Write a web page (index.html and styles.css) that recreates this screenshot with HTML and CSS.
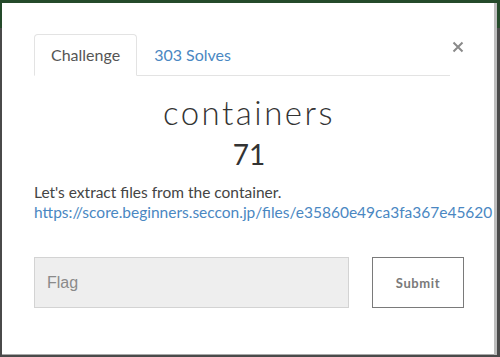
FILE: index.html
```html
<!DOCTYPE html>
<html lang="en">
<head>
    <meta charset="UTF-8">
    <meta name="viewport" content="width=device-width, initial-scale=1.0">
    <title>containers - Challenge</title>
    <link rel="stylesheet" href="styles.css">
</head>
<body>
    <div class="modal">
        <div class="modal-header">
            <ul class="tabs">
                <li class="tab active">Challenge</li>
                <li class="tab"><a href="#solves">303 Solves</a></li>
            </ul>
            <button class="close" type="button" aria-label="Close">
                <svg width="12" height="12" viewBox="0 0 12 12">
                    <path d="M1.5 1.5 L10.5 10.5 M10.5 1.5 L1.5 10.5" stroke="#8a8a8a" stroke-width="2" fill="none"/>
                </svg>
            </button>
        </div>

        <h2 class="challenge-name">containers</h2>
        <h3 class="challenge-value">71</h3>

        <div class="challenge-desc">
            <p>Let's extract files from the container.</p>
            <a href="#file">https://score.beginners.seccon.jp/files/e35860e49ca3fa367e45620</a>
        </div>

        <form class="flag-form">
            <input class="flag-input" type="text" placeholder="Flag">
            <button class="submit" type="button">Submit</button>
        </form>
    </div>
</body>
</html>
```

FILE: styles.css
```css
html, body {
    margin: 0;
    height: 357px;
    overflow: hidden;
}
body {
    font-family: 'Lato', sans-serif;
    background: linear-gradient(#244a2a 0, #244a2a 28px, #4a4a4a 28px);
    padding-top: 3px;
    box-sizing: border-box;
}
.modal {
    margin-left: 2px;
    width: 492px;
    height: 352px;
    box-sizing: border-box;
    background: white;
    border-bottom: 1px solid #a9a9a9;
    box-shadow: 3px 0 0 #bdbdbd;
    padding: 31px 30px 0 32px;
}
.modal-header {
    display: flex;
    align-items: flex-start;
}
.tabs {
    flex: 1;
    display: flex;
    list-style: none;
    margin: 0;
    padding: 0;
    border-bottom: 1px solid #e3e3e3;
}
.tab {
    height: 40px;
    line-height: 40px;
    padding: 0 16px;
    font-size: 16px;
    margin-bottom: -1px;
    border: 1px solid transparent;
    border-radius: 4px 4px 0 0;
}
.tab.active {
    color: #555;
    background: white;
    border-color: #e3e3e3 #e3e3e3 white;
}
.tab a {
    color: #4a87c2;
    text-decoration: none;
}
.close {
    background: none;
    border: none;
    padding: 0;
    margin: 7px 0 0 2px;
    width: 12px;
    height: 12px;
    cursor: pointer;
}
.close svg {
    display: block;
}
.challenge-name {
    margin: 18px 0 0;
    text-align: center;
    font-weight: 300;
    font-size: 33px;
    line-height: 36px;
    letter-spacing: 2.5px;
    color: #333;
}
.challenge-value {
    margin: 8px 0 0;
    text-align: center;
    font-weight: 400;
    font-size: 28px;
    line-height: 32px;
    color: #333;
}
.challenge-desc {
    margin-top: 12px;
    font-size: 15.5px;
    line-height: 20px;
    color: #444;
    white-space: nowrap;
}
.challenge-desc p {
    margin: 0;
}
.challenge-desc a {
    color: #4a87c2;
    text-decoration: none;
}
.flag-form {
    display: flex;
    gap: 23px;
    margin-top: 35px;
}
.flag-input {
    width: 315px;
    height: 51px;
    box-sizing: border-box;
    background: #eeeeee;
    border: 1px solid #d3d3d3;
    padding: 0 12px;
    font-family: 'Liberation Sans', sans-serif;
    font-size: 16px;
    color: #555;
}
.flag-input::placeholder {
    color: #8a8a8a;
}
.submit {
    width: 92px;
    height: 51px;
    box-sizing: border-box;
    background: white;
    border: 1px solid #7a7a7a;
    font-family: 'Lato', sans-serif;
    font-weight: bold;
    font-size: 13px;
    letter-spacing: 0.6px;
    color: #7a7a7a;
    cursor: pointer;
}
```
